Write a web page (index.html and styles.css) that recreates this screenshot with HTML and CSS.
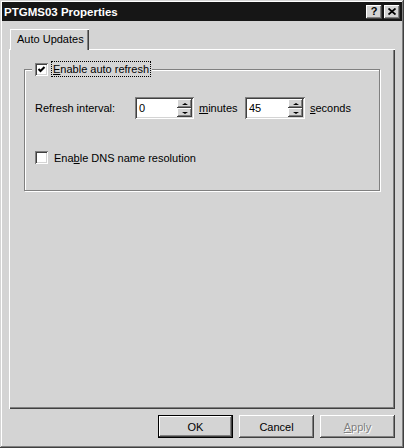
FILE: index.html
```html
<!DOCTYPE html>
<html lang="en">
<head>
  <meta charset="UTF-8">
  <title>PTGMS03 Properties</title>
  <link rel="stylesheet" href="styles.css">
</head>
<body>
  <div class="window">
    <div class="titlebar">
      <span class="title">PTGMS03 Properties</span>
      <div class="caption-buttons">
        <span class="cap-btn">?</span>
        <span class="cap-btn">
          <svg width="8" height="7" viewBox="0 0 8 7"><path d="M0.5 0.5 L7.5 6.5 M7.5 0.5 L0.5 6.5" stroke="#000" stroke-width="1.8"/></svg>
        </span>
      </div>
    </div>

    <div class="client">
      <div class="tabs">
        <div class="tab active">Auto Updates</div>
      </div>

      <div class="panel">
        <fieldset class="group">
          <legend class="group-legend">
            <span class="check">
              <svg width="9" height="9" viewBox="0 0 9 9"><path d="M1.5 4 L3.5 6 L7.5 2" fill="none" stroke="#000" stroke-width="2"/></svg>
            </span>
            <span class="focus-label"><u>E</u>nable auto refresh</span>
          </legend>

          <div class="interval-row">
            <span class="row-label">Refresh interval:</span>
            <div class="spin">
              <span class="spin-value">0</span>
              <span class="spin-buttons"><span class="spin-btn up"></span><span class="spin-btn down"></span></span>
            </div>
            <span class="unit"><u>m</u>inutes</span>
            <div class="spin wide">
              <span class="spin-value">45</span>
              <span class="spin-buttons"><span class="spin-btn up"></span><span class="spin-btn down"></span></span>
            </div>
            <span class="unit"><u>s</u>econds</span>
          </div>

          <div class="check-row">
            <span class="check"></span>
            <span class="check-text">Ena<u>b</u>le DNS name resolution</span>
          </div>
        </fieldset>
      </div>

      <div class="actions">
        <button class="btn default">OK</button>
        <button class="btn">Cancel</button>
        <button class="btn disabled"><u>A</u>pply</button>
      </div>
    </div>
  </div>
</body>
</html>
```

FILE: styles.css
```css
body {
  margin: 0;
  background-color: #d4d4d4;
  font-family: "Liberation Sans", Arial, sans-serif;
  font-size: 11px;
  color: #000;
}
u {
  text-decoration-thickness: 1px;
  text-underline-offset: 1px;
}
.window {
  width: 404px;
  height: 448px;
  box-sizing: border-box;
  padding: 2px;
  background-color: #d4d4d4;
  box-shadow: inset -1px -1px #404040, inset 1px 1px #d4d4d4, inset -2px -2px #808080, inset 2px 2px #fff;
  display: flex;
  flex-direction: column;
}
.titlebar {
  height: 19px;
  background-color: #161616;
  display: flex;
  align-items: center;
  justify-content: space-between;
  padding: 0 2px 0 2px;
}
.title {
  color: #fff;
  font-weight: bold;
  font-size: 11.5px;
}
.caption-buttons {
  display: flex;
  gap: 2px;
}
.cap-btn {
  width: 16px;
  height: 14px;
  background-color: #d4d4d4;
  box-shadow: inset -1px -1px #404040, inset 1px 1px #fff, inset -2px -2px #808080;
  display: flex;
  align-items: center;
  justify-content: center;
  font-weight: bold;
  font-size: 11px;
  line-height: 1;
}
.client {
  flex: 1;
  display: flex;
  flex-direction: column;
  padding: 8px 7px 0 7px;
}
.tabs {
  display: flex;
  padding-left: 1px;
}
.tab {
  position: relative;
  z-index: 1;
  width: 79px;
  height: 21px;
  margin-bottom: -1px;
  box-sizing: border-box;
  padding: 4px 0 0 7px;
  background-color: #d4d4d4;
  box-shadow: inset 1px 1px #fff, inset -1px 0 #404040, inset -2px 0 #808080;
}
.panel {
  flex: 1;
  padding: 12px 15px 0 15px;
  box-shadow: inset 1px 1px #fff, inset -1px -1px #404040, inset -2px -2px #808080;
}
.group {
  margin: 0;
  min-width: 0;
  padding: 0 0 26px 10px;
  border: 1px solid #808080;
  box-shadow: 1px 1px 0 #fff, inset 1px 1px 0 #fff;
}
.group-legend {
  display: flex;
  align-items: center;
  height: 16px;
  margin-left: -3px;
  padding: 0 2px 0 3px;
  background-color: #d4d4d4;
}
.check {
  width: 13px;
  height: 13px;
  flex: none;
  box-sizing: border-box;
  background-color: #fff;
  box-shadow: inset 1px 1px #808080, inset -1px -1px #fff, inset 2px 2px #404040, inset -2px -2px #d4d4d4;
  display: flex;
  align-items: center;
  justify-content: center;
}
.focus-label {
  margin-left: 4px;
  padding: 0 1px;
  outline: 1px dotted #000;
  line-height: 14px;
}
.interval-row {
  display: flex;
  align-items: center;
  height: 22px;
  margin-top: 20px;
}
.row-label {
  width: 100px;
}
.spin {
  width: 59px;
  height: 22px;
  box-sizing: border-box;
  padding: 2px;
  background-color: #fff;
  box-shadow: inset 1px 1px #808080, inset -1px -1px #fff, inset 2px 2px #404040, inset -2px -2px #d4d4d4;
  display: flex;
}
.spin.wide {
  width: 60px;
}
.spin-value {
  flex: 1;
  padding: 3px 0 0 2px;
}
.spin-buttons {
  width: 15px;
  display: flex;
  flex-direction: column;
}
.spin-btn {
  flex: 1;
  background-color: #d4d4d4;
  box-shadow: inset -1px -1px #404040, inset 1px 1px #fff, inset -2px -2px #808080;
  display: flex;
  align-items: center;
  justify-content: center;
}
.spin-btn::after {
  content: "";
  border-left: 3px solid transparent;
  border-right: 3px solid transparent;
}
.spin-btn.up::after {
  border-bottom: 2px solid #000;
}
.spin-btn.down::after {
  border-top: 2px solid #000;
}
.unit {
  margin-left: 5px;
  width: 46px;
}
.check-row {
  display: flex;
  align-items: center;
  height: 13px;
  margin-top: 32px;
}
.check-text {
  margin-left: 6px;
}
.actions {
  display: flex;
  justify-content: flex-end;
  gap: 6px;
  padding: 6px 0 8px 0;
}
.btn {
  width: 75px;
  height: 23px;
  padding: 0;
  border: none;
  background-color: #d4d4d4;
  font-family: "Liberation Sans", Arial, sans-serif;
  font-size: 11px;
  color: #000;
  box-shadow: inset -1px -1px #404040, inset 1px 1px #fff, inset -2px -2px #808080;
}
.btn.default {
  box-shadow: inset 0 0 0 1px #000, inset -2px -2px #404040, inset 2px 2px #fff, inset -3px -3px #808080;
}
.btn.disabled {
  color: #808080;
  text-shadow: 1px 1px 0 #fff;
}
```
